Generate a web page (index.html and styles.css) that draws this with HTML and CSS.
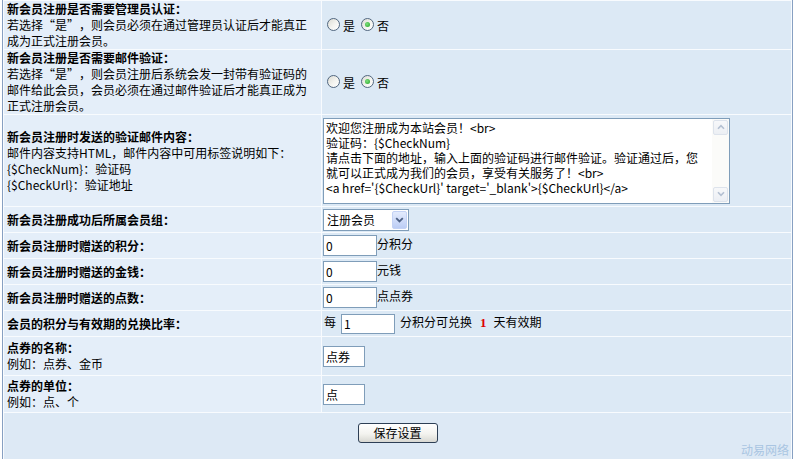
FILE: index.html
```html
<!DOCTYPE html>
<html lang="zh-CN">
<head>
<meta charset="utf-8">
<title>会员注册设置</title>
<link rel="stylesheet" href="styles.css">
</head>
<body>
<table class="cfg">
  <tr class="r-48">
    <td class="lbl"><b>新会员注册是否需要管理员认证：</b><br>若选择<span class="fw open">“</span>是<span class="fw close">”</span>，则会员必须在通过管理员认证后才能真正<br>成为正式注册会员。</td>
    <td class="val">
      <span class="radio"></span><span class="opt">是</span><span class="radio on"></span><span class="opt">否</span>
    </td>
  </tr>
  <tr class="r-64">
    <td class="lbl"><b>新会员注册是否需要邮件验证：</b><br>若选择<span class="fw open">“</span>是<span class="fw close">”</span>，则会员注册后系统会发一封带有验证码的<br>邮件给此会员，会员必须在通过邮件验证后才能真正成为<br>正式注册会员。</td>
    <td class="val">
      <span class="radio"></span><span class="opt">是</span><span class="radio on"></span><span class="opt">否</span>
    </td>
  </tr>
  <tr class="r-91">
    <td class="lbl"><b>新会员注册时发送的验证邮件内容：</b><br>邮件内容支持HTML，邮件内容中可用标签说明如下：<br>{$CheckNum}：验证码<br>{$CheckUrl}：验证地址</td>
    <td class="val">
      <div class="ta">
        <textarea class="ta-text" spellcheck="false">欢迎您注册成为本站会员！&lt;br&gt;
验证码：{$CheckNum}
请点击下面的地址，输入上面的验证码进行邮件验证。验证通过后，您
就可以正式成为我们的会员，享受有关服务了！&lt;br&gt;
&lt;a href='{$CheckUrl}' target='_blank'&gt;{$CheckUrl}&lt;/a&gt;</textarea>
        <div class="sb">
          <span class="sb-btn"><svg width="8" height="6" viewBox="0 0 8 6"><path d="M1 4.8 L4 1.6 L7 4.8" fill="none" stroke="#b4c0d2" stroke-width="1.6"/></svg></span>
          <span class="sb-btn"><svg width="8" height="6" viewBox="0 0 8 6"><path d="M1 1.2 L4 4.4 L7 1.2" fill="none" stroke="#b4c0d2" stroke-width="1.6"/></svg></span>
        </div>
      </div>
    </td>
  </tr>
  <tr class="r-25">
    <td class="lbl"><b>新会员注册成功后所属会员组：</b></td>
    <td class="val">
      <span class="select"><span class="select-text">注册会员</span><span class="select-btn"><svg width="9" height="6" viewBox="0 0 9 6"><path d="M1.2 1.2 L4.5 4.5 L7.8 1.2" fill="none" stroke="#4d6185" stroke-width="1.8"/></svg></span></span>
    </td>
  </tr>
  <tr class="r-25">
    <td class="lbl"><b>新会员注册时赠送的积分：</b></td>
    <td class="val"><input class="field" type="text" value="0">分积分</td>
  </tr>
  <tr class="r-25">
    <td class="lbl"><b>新会员注册时赠送的金钱：</b></td>
    <td class="val"><input class="field" type="text" value="0">元钱</td>
  </tr>
  <tr class="r-25">
    <td class="lbl"><b>新会员注册时赠送的点数：</b></td>
    <td class="val"><input class="field" type="text" value="0">点点券</td>
  </tr>
  <tr class="r-25">
    <td class="lbl"><b>会员的积分与有效期的兑换比率：</b></td>
    <td class="val"><span class="pre">每</span><input class="field gap" type="text" value="1">分积分可兑换<b class="num">1</b>天有效期</td>
  </tr>
  <tr class="r-38">
    <td class="lbl"><b>点券的名称：</b><br>例如：点券、金币</td>
    <td class="val"><input class="field short" type="text" value="点券"></td>
  </tr>
  <tr class="r-36">
    <td class="lbl"><b>点券的单位：</b><br>例如：点、个</td>
    <td class="val"><input class="field short" type="text" value="点"></td>
  </tr>
  <tr>
    <td class="foot" colspan="2">
      <button class="btn" type="button">保存设置</button>
      <div class="brand">动易网络</div>
    </td>
  </tr>
</table>
</body>
</html>
```

FILE: styles.css
```css
body {
  margin: 0;
  background: #fff;
  color: #000;
  font: 12px/16px "Noto Sans CJK SC", "Liberation Sans", sans-serif;
}

/* settings table: 1px light gaps between cells act as row rules */
.cfg {
  width: 791px;
  margin-left: 2px;
  border: 1px solid #87a0c2;
  border-top: 0;
  border-spacing: 1px;
  background: #f8fbfe;
}

.cfg td {
  padding: 0;
  vertical-align: middle;
}

.r-48 td { height: 48px; }
.r-64 td { height: 64px; }
.r-91 td { height: 91px; }
.r-25 td { height: 25px; }
.r-38 td { height: 38px; }
.r-36 td { height: 36px; }

.lbl {
  width: 311px;
  padding: 0 3px !important;
  background: #e4eef9;
  white-space: nowrap;
}

.lbl b {
  font-weight: 700;
}

/* quotation marks set in a full-width cell */
.fw {
  display: inline-block;
  width: 12px;
}

.fw.open {
  text-align: right;
}

.fw.close {
  text-align: left;
}

.val {
  padding: 0 1px !important;
  background: #dce9f5;
  white-space: nowrap;
}

/* radio buttons */
.radio {
  display: inline-block;
  position: relative;
  width: 13px;
  height: 13px;
  box-sizing: border-box;
  border: 1px solid #51677f;
  border-radius: 50%;
  background: linear-gradient(135deg, #dcdcd4 0%, #f4f4f0 55%, #fff 100%);
  vertical-align: middle;
  margin: -2px 3px 0 4px;
}

.radio + .opt + .radio {
  margin-left: 6px;
}

.radio.on::after {
  content: "";
  position: absolute;
  left: 3px;
  top: 3px;
  width: 5px;
  height: 5px;
  border-radius: 50%;
  background: radial-gradient(circle at 40% 40%, #7ee07e, #21a121);
}

.opt {
  vertical-align: middle;
}

/* multi-line mail body with its scrollbar */
.ta {
  display: flex;
  width: 407px;
  height: 86px;
  box-sizing: border-box;
  border: 1px solid #7f9db9;
  background: #fff;
}

.ta-text {
  flex: 1;
  margin: 0;
  border: 0;
  padding: 1px 2px;
  resize: none;
  overflow: hidden;
  outline: none;
  background: #fff;
  color: #000;
  font: 12px/15px "Noto Sans CJK SC", "Liberation Sans", sans-serif;
}

.sb {
  width: 17px;
  display: flex;
  flex-direction: column;
  justify-content: space-between;
  align-items: center;
  padding: 1px 0;
  background: #fbfbf9;
}

.sb-btn {
  width: 15px;
  height: 15px;
  box-sizing: border-box;
  border: 1px solid #dde3ec;
  border-radius: 2px;
  background: linear-gradient(#f7f8fa, #eceff4);
  display: flex;
  align-items: center;
  justify-content: center;
}

/* drop-down */
.select {
  display: inline-flex;
  width: 86px;
  height: 22px;
  box-sizing: border-box;
  border: 1px solid #7f9db9;
  background: #fff;
  vertical-align: middle;
}

.select-text {
  flex: 1;
  padding-left: 3px;
  line-height: 20px;
}

.select-btn {
  width: 15px;
  margin: 1px;
  box-sizing: border-box;
  border: 1px solid #c3d2f5;
  border-radius: 2px;
  background: linear-gradient(#e3ebfd, #bccdf5);
  display: flex;
  align-items: center;
  justify-content: center;
}

/* text inputs */
.field {
  width: 54px;
  height: 21px;
  box-sizing: border-box;
  margin: 0;
  padding: 0 2px;
  border: 1px solid #7f9db9;
  background: #fff;
  color: #000;
  font: 12px/19px "Noto Sans CJK SC", "Liberation Sans", sans-serif;
  vertical-align: middle;
  outline: none;
}

.field.short {
  width: 42px;
}

.field.gap {
  margin: 0 5px 0 5px;
  height: 20px;
}

.pre {
  margin-left: 1px;
}

.num {
  color: #d00;
  font: 700 13px "Liberation Serif", serif;
  margin: 0 7px 0 8px;
}

/* footer row */
.foot {
  height: 43px;
  padding: 10px 0 0 0 !important;
  vertical-align: top !important;
  background: #dde9f5;
  text-align: center;
}

.btn {
  display: block;
  margin: 0 auto;
  width: 80px;
  height: 20px;
  padding: 0;
  border: 1px solid #2d3f55;
  border-radius: 3px;
  background: linear-gradient(#ffffff 0%, #f3f3ef 55%, #d8d8d2 100%);
  color: #000;
  font: 12px/18px "Noto Sans CJK SC", "Liberation Sans", sans-serif;
}

.brand {
  text-align: right;
  padding-right: 2px;
  line-height: 13px;
  color: #a9c5e2;
}
```
